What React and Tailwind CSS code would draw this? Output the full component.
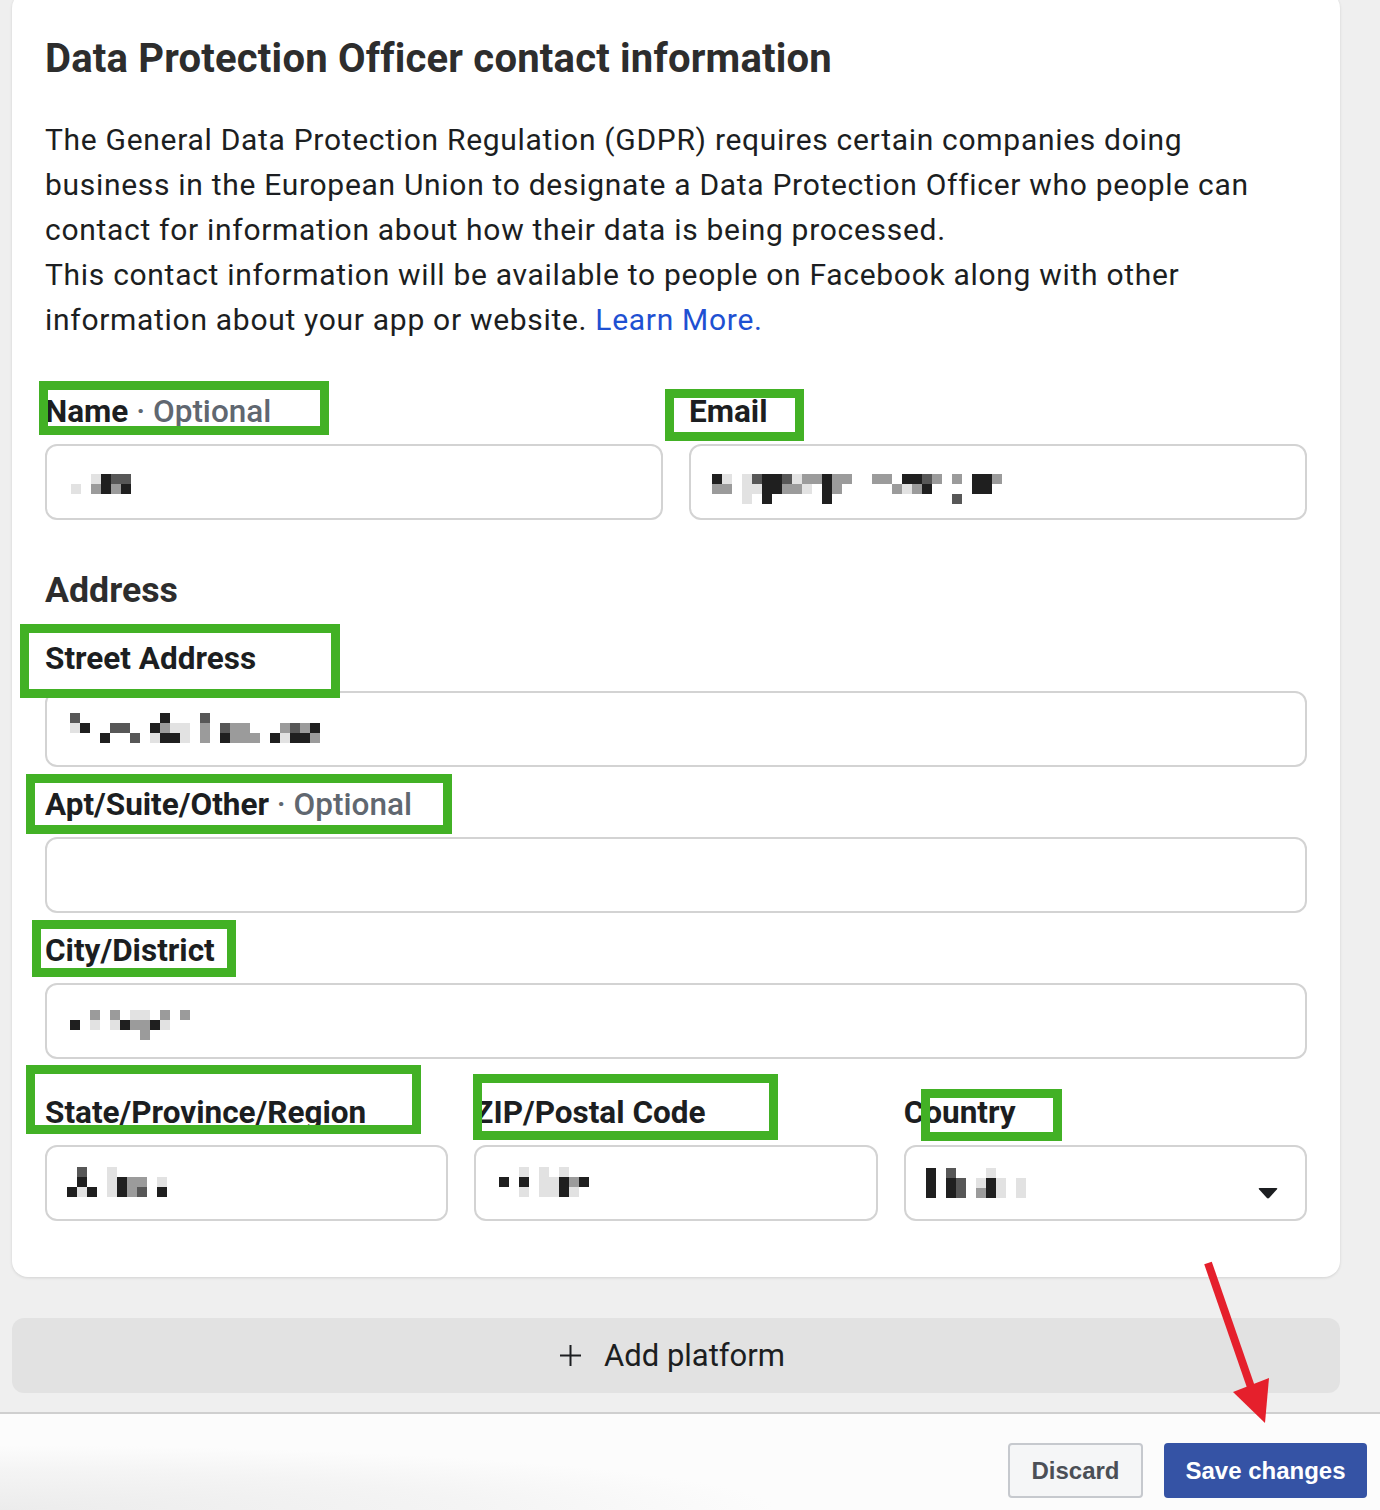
import React from "react";

const SHADES = { "1": "#e2e2e2", "2": "#9b9b9b", "3": "#575757", "4": "#1f1f1f" };

// redacted values, drawn as 10px mosaic cells
const MOSAICS = {
  name: ["  1433", "1 2424"],
  email: [
    "41 13443122422  22 4432 2 442",
    "22 1144221 42     2124    44",
    "   1 4     4            3",
  ],
  street: [
    "3        4   3",
    "14  33  4211 2 322   2324",
    "   4  3 1441 2 4222 41442",
  ],
  city: ["  2 2 11 2 2", "4 1 142241", "       2"],
  state: [" 3  1", " 4  1422 1", "414 1423 4"],
  zip: ["  1 1 1", "4 4 11424", "  1 1141"],
  country: ["4 3   1", "4 43 141 1", "4 43 241 1"],
};

function Mosaic({ rows }) {
  const cols = Math.max(...rows.map((r) => r.length));
  return (
    <svg width={cols * 10} height={rows.length * 10} className="block shrink-0">
      {rows.map((r, y) =>
        r.split("").map((c, x) =>
          SHADES[c] ? <rect key={`${x}-${y}`} x={x * 10} y={y * 10} width="10" height="10" fill={SHADES[c]} /> : null
        )
      )}
    </svg>
  );
}

function Label({ children, optional }) {
  return (
    <div className="mb-[13px] text-[31.5px] leading-[38px] font-bold text-[#1c1e21] whitespace-nowrap">
      {children}
      {optional && <span className="font-medium text-[#606770]"> · Optional</span>}
    </div>
  );
}

function Input({ mosaic, pad, caret }) {
  return (
    <div className={`h-[76px] rounded-[12px] border-2 border-[#d3d3d3] bg-white flex items-start ${pad}`}>
      {mosaic && <Mosaic rows={MOSAICS[mosaic]} />}
      {caret && (
        <svg width="20" height="11" viewBox="0 0 20 11" className="self-center ml-auto mr-[27px]">
          <path d="M1.5 0 H18.5 Q20 0 19 1.3 L11.3 9.8 Q10 11 8.7 9.8 L1 1.3 Q0 0 1.5 0 Z" fill="#1c1e21" />
        </svg>
      )}
    </div>
  );
}

const GREEN = [
  "left-[39px] top-[381px] w-[290px] h-[54px]",
  "left-[665px] top-[389px] w-[139px] h-[52px]",
  "left-[20px] top-[624px] w-[320px] h-[74px]",
  "left-[26px] top-[774px] w-[426px] h-[60px]",
  "left-[32px] top-[920px] w-[204px] h-[57px]",
  "left-[26px] top-[1065px] w-[395px] h-[69px]",
  "left-[473px] top-[1074px] w-[305px] h-[66px]",
  "left-[921px] top-[1089px] w-[141px] h-[52px]",
];

export default function App() {
  return (
    <div className="relative w-[1380px] h-[1510px] overflow-hidden bg-[#efefef] font-['Roboto',sans-serif] text-[#1c1e21]">
      <div className="pl-[12px] pr-[40px]">
        {/* card */}
        <div className="-mt-[8px] bg-white rounded-[16px] shadow-[0_1px_3px_rgba(0,0,0,0.12)] pt-[43px] px-[33px] pb-[56px]">
          <h1 className="text-[40px] leading-[48px] font-bold tracking-[0.2px] text-[#2d2d2d] whitespace-nowrap">
            Data Protection Officer contact information
          </h1>
          <div className="mt-[34px] text-[30px] leading-[45px] tracking-[0.7px] whitespace-nowrap">
            <div>The General Data Protection Regulation (GDPR) requires certain companies doing</div>
            <div>business in the European Union to designate a Data Protection Officer who people can</div>
            <div>contact for information about how their data is being processed.</div>
            <div>This contact information will be available to people on Facebook along with other</div>
            <div>
              information about your app or website. <span className="text-[#1e50d2]">Learn More.</span>
            </div>
          </div>

          <div className="mt-[51px] grid grid-cols-2 gap-x-[26px]">
            <div>
              <Label optional>Name</Label>
              <Input mosaic="name" pad="pl-[24px] pt-[28px]" />
            </div>
            <div>
              <Label>Email</Label>
              <Input mosaic="email" pad="pl-[21px] pt-[28px]" />
            </div>
          </div>

          <h2 className="mt-[49px] text-[35.7px] leading-[42px] font-bold text-[#2d2d2d]">Address</h2>

          <div className="mt-[29px]">
            <Label>Street Address</Label>
            <Input mosaic="street" pad="pl-[23px] pt-[20px]" />
          </div>
          <div className="mt-[19px]">
            <Label optional>Apt/Suite/Other</Label>
            <Input />
          </div>
          <div className="mt-[19px]">
            <Label>City/District</Label>
            <Input mosaic="city" pad="pl-[23px] pt-[25px]" />
          </div>

          <div className="mt-[35px] grid grid-cols-3 gap-x-[26px]">
            <div>
              <Label>State/Province/Region</Label>
              <Input mosaic="state" pad="pl-[20px] pt-[20px]" />
            </div>
            <div>
              <Label>ZIP/Postal Code</Label>
              <Input mosaic="zip" pad="pl-[23px] pt-[20px]" />
            </div>
            <div>
              <Label>Country</Label>
              <Input mosaic="country" pad="pl-[20px] pt-[21px]" caret />
            </div>
          </div>
        </div>

        {/* add platform */}
        <div className="mt-[41px] h-[75px] rounded-[12px] bg-[#e2e2e2] flex items-center justify-center gap-[22px] pr-[8px]">
          <svg width="23" height="23" viewBox="0 0 23 23">
            <path d="M11.5 1 V22 M1 11.5 H22" stroke="#1c1e21" strokeWidth="2" />
          </svg>
          <span className="text-[31px] leading-[36px] text-[#1c1e21]">Add platform</span>
        </div>
      </div>

      <div className="mt-[19px] h-[2px] bg-[#cfcfcf]" />
      <div className="h-[96px] flex justify-end items-start gap-[21px] pt-[29px] pr-[13px] bg-[radial-gradient(ellipse_75%_90%_at_0%_100%,#ececec_0%,#f4f4f4_45%,#fcfcfc_75%)] font-['Liberation_Sans',sans-serif]">
        <button className="w-[135px] h-[55px] rounded-[4px] border-2 border-[#c6c9ce] bg-[#f5f6f7] text-[24px] font-bold text-[#4b4f56]">
          Discard
        </button>
        <button className="w-[203px] h-[55px] rounded-[4px] bg-[#3553a5] text-[24px] font-bold text-white">
          Save changes
        </button>
      </div>

      {/* annotation boxes */}
      {GREEN.map((c, i) => (
        <div key={i} className={`absolute border-[9px] border-[#42b125] pointer-events-none ${c}`} />
      ))}

      {/* red arrow */}
      <svg className="absolute inset-0 pointer-events-none" width="1380" height="1510" viewBox="0 0 1380 1510">
        <line x1="1208" y1="1263" x2="1252" y2="1390" stroke="#e5202c" strokeWidth="8" />
        <polygon points="1233,1392 1269,1378 1265,1423" fill="#e5202c" />
      </svg>
    </div>
  );
}
